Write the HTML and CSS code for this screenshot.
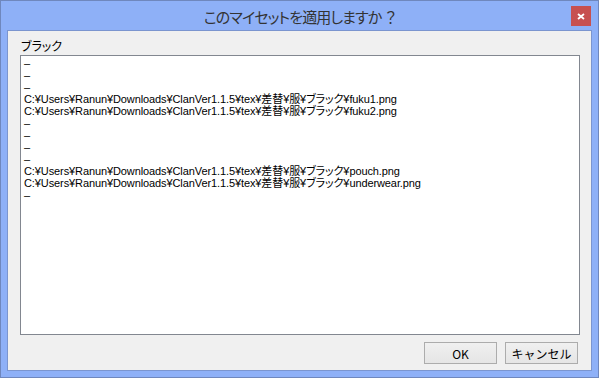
FILE: index.html
```
<!DOCTYPE html>
<html lang="ja">
  <head>
    <meta charset="UTF-8" />
    <title>このマイセットを適用しますか？</title>
    <link rel="stylesheet" href="styles.css">
  </head>
  <body>
    <div class="window">
      <div class="titlebar">
        <span class="title">このマイセットを適用しますか<span class="title-mark">？</span></span>
        <button class="close-btn">
          <svg viewBox="0 0 8 7" class="close-icon">
            <path d="M1 1l6 5M7 1l-6 5" stroke="#fff" stroke-width="1.8" />
          </svg>
        </button>
      </div>
      <div class="client">
        <p class="group-label">ブラック</p>
        <div class="listbox">
          <p>–</p>
          <p>–</p>
          <p>–</p>
          <p>C:¥Users¥Ranun¥Downloads¥ClanVer1.1.5¥tex¥差替¥服¥ブラック¥fuku1.png</p>
          <p>C:¥Users¥Ranun¥Downloads¥ClanVer1.1.5¥tex¥差替¥服¥ブラック¥fuku2.png</p>
          <p>–</p>
          <p>–</p>
          <p>–</p>
          <p>–</p>
          <p>C:¥Users¥Ranun¥Downloads¥ClanVer1.1.5¥tex¥差替¥服¥ブラック¥pouch.png</p>
          <p>C:¥Users¥Ranun¥Downloads¥ClanVer1.1.5¥tex¥差替¥服¥ブラック¥underwear.png</p>
          <p>–</p>
        </div>
        <div class="actions">
          <button class="btn">OK</button>
          <button class="btn">キャンセル</button>
        </div>
      </div>
    </div>
  </body>
</html>
```

FILE: styles.css
```
* {
  margin: 0;
  padding: 0;
  box-sizing: border-box;
}

body {
  font-family: "Noto Sans CJK JP", "Noto Sans", sans-serif;
  font-feature-settings: "palt";
  color: #000;
  background-color: #fff;
}

.window {
  width: 599px;
  height: 378px;
  border: 1px solid #6f87bd;
  background-color: #8eb0f7;
  display: flex;
  flex-direction: column;
}

/* TITLE BAR */
.titlebar {
  height: 29px;
  position: relative;
  display: flex;
  align-items: center;
  justify-content: center;
}
.title {
  font-size: 15px;
  letter-spacing: -0.9px;
  color: #333;
  margin-top: 1px;
}
.title-mark {
  margin-left: 4px;
}
.close-btn {
  position: absolute;
  top: 5px;
  right: 7px;
  width: 20px;
  height: 20px;
  border: none;
  background-color: #c75050;
  display: flex;
  align-items: center;
  justify-content: center;
}
.close-icon {
  width: 8px;
  height: 7px;
}

/* CLIENT AREA */
.client {
  flex: 1;
  margin: 0 6px 6px 6px;
  border: 1px solid #7b95cf;
  background-color: #f0f0f0;
  display: flex;
  flex-direction: column;
  padding: 0 11px 6px 12px;
}
.group-label {
  font-size: 12px;
  line-height: 12px;
  height: 24px;
  padding: 9px 0 0 1px;
}
.listbox {
  flex: 1;
  background-color: #fff;
  border: 1px solid #828790;
  padding: 1px 3px;
  font-family: "Liberation Sans", "Noto Sans CJK JP", sans-serif;
  font-size: 11px;
  line-height: 12px;
  letter-spacing: -0.1px;
}
.listbox p {
  height: 12px;
  white-space: nowrap;
}
.actions {
  display: flex;
  justify-content: flex-end;
  gap: 8px;
  padding-top: 7px;
  padding-right: 2px;
}
.btn {
  width: 73px;
  height: 22px;
  border: 1px solid #acacac;
  background: linear-gradient(#f0f0f0, #e5e5e5);
  font-family: inherit;
  font-size: 12px;
  color: #000;
}
```
